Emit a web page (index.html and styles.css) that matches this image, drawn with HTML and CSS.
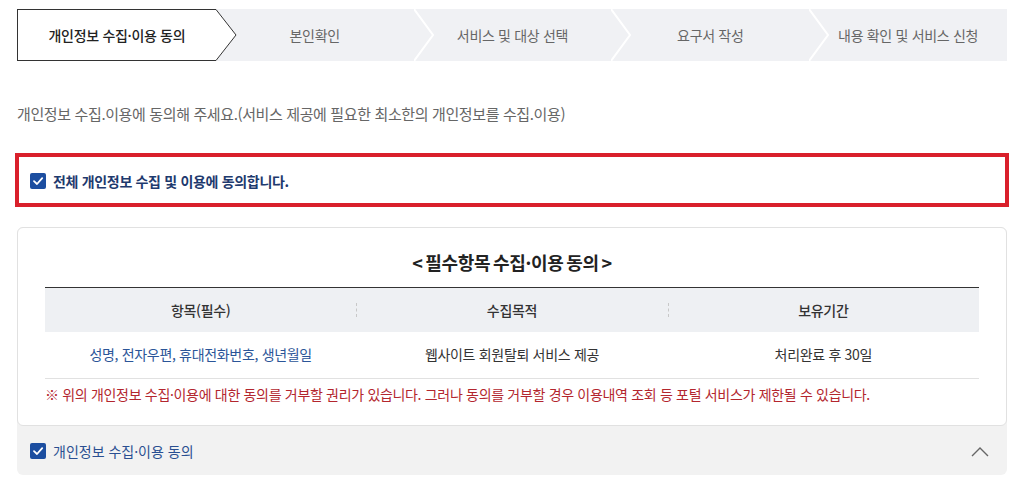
FILE: index.html
```html
<!DOCTYPE html>
<html lang="ko">
<head>
<meta charset="utf-8">
<title>개인정보 수집·이용 동의</title>
<link rel="stylesheet" href="styles.css">
</head>
<body>
<div class="page">
  <ol class="steps">
    <li class="step active">개인정보 수집·이용 동의<svg class="arrow" viewBox="0 0 21 52" width="21" height="52"><polygon points="0,0 20,26 0,52" fill="#fff"/><polyline points="0,0.5 20,26 0,51.5" fill="none" stroke="#333" stroke-width="1"/></svg></li>
    <li class="step">본인확인<svg class="arrow" viewBox="0 0 21 52" width="21" height="52"><polyline points="0,0 19,26 0,52" fill="none" stroke="#fff" stroke-width="2"/></svg></li>
    <li class="step">서비스 및 대상 선택<svg class="arrow" viewBox="0 0 21 52" width="21" height="52"><polyline points="0,0 19,26 0,52" fill="none" stroke="#fff" stroke-width="2"/></svg></li>
    <li class="step">요구서 작성<svg class="arrow" viewBox="0 0 21 52" width="21" height="52"><polyline points="0,0 19,26 0,52" fill="none" stroke="#fff" stroke-width="2"/></svg></li>
    <li class="step">내용 확인 및 서비스 신청</li>
  </ol>

  <p class="intro">개인정보 수집.이용에 동의해 주세요.(서비스 제공에 필요한 최소한의 개인정보를 수집.이용)</p>

  <label class="all-agree">
    <span class="check"><svg viewBox="0 0 16 16" width="16" height="16"><polyline points="4,8.2 7,11 12.2,5.2" fill="none" stroke="#fff" stroke-width="1.8" stroke-linecap="round" stroke-linejoin="round"/></svg></span>
    <span class="all-text">전체 개인정보 수집 및 이용에 동의합니다.</span>
  </label>

  <section class="accordion">
    <div class="panel">
      <h2 class="panel-title">&lt; 필수항목 수집·이용 동의 &gt;</h2>
      <table class="info">
        <thead>
          <tr><th>항목(필수)</th><th class="sep">수집목적</th><th class="sep">보유기간</th></tr>
        </thead>
        <tbody>
          <tr><td class="items">성명, 전자우편, 휴대전화번호, 생년월일</td><td>웹사이트 회원탈퇴 서비스 제공</td><td>처리완료 후 30일</td></tr>
        </tbody>
      </table>
      <p class="note">※ 위의 개인정보 수집·이용에 대한 동의를 거부할 권리가 있습니다. 그러나 동의를 거부할 경우 이용내역 조회 등 포털 서비스가 제한될 수 있습니다.</p>
    </div>
    <div class="acc-head">
      <label class="acc-label">
        <span class="check"><svg viewBox="0 0 16 16" width="16" height="16"><polyline points="4,8.2 7,11 12.2,5.2" fill="none" stroke="#fff" stroke-width="1.8" stroke-linecap="round" stroke-linejoin="round"/></svg></span>
        <span class="acc-text">개인정보 수집·이용 동의</span>
      </label>
      <svg class="chev" viewBox="0 0 18 11" width="18" height="11"><polyline points="1,10 9,2 17,10" fill="none" stroke="#666" stroke-width="1.4"/></svg>
    </div>
  </section>
</div>
</body>
</html>
```

FILE: styles.css
```css
* { box-sizing: border-box; }
html, body { margin: 0; padding: 0; background: #fff; }
body {
  font-family: "Noto Sans CJK KR", "Noto Sans", sans-serif;
  color: #333;
  letter-spacing: -0.02em;
}
.page { padding: 9px 17px 0; }

.steps {
  list-style: none;
  margin: 0;
  padding: 0;
  display: flex;
  height: 52px;
}
.step {
  flex: 1;
  position: relative;
  display: flex;
  align-items: center;
  justify-content: center;
  background: #f0f1f4;
  color: #666;
  font-size: 14px;
  line-height: 20px;
}
.step.active {
  background: #fff;
  color: #222;
  font-weight: 500;
  border: 1px solid #333;
  border-right: 0;
}
.arrow {
  position: absolute;
  left: 100%;
  top: 0;
  z-index: 1;
  display: block;
}
.step.active .arrow { top: -1px; }

.intro {
  margin: 43px 0 0;
  font-size: 15px;
  line-height: 20px;
  color: #666;
  letter-spacing: -0.025em;
}

.all-agree {
  display: flex;
  align-items: center;
  gap: 7px;
  margin: 29px -2px 0;
  height: 54px;
  border: 4px solid #d9202b;
  padding: 2px 0 0 11px;
}
.check {
  width: 16px;
  height: 16px;
  border-radius: 2px;
  background: #1c4ea0;
  display: inline-flex;
  flex: none;
}
.check svg { display: block; }
.all-text {
  font-size: 14px;
  line-height: 20px;
  font-weight: 700;
  color: #1e3a6e;
}

.accordion {
  margin-top: 20px;
  background: #f2f2f2;
  border-radius: 6px;
}
.panel {
  background: #fff;
  border: 1px solid #e1e1e1;
  border-radius: 6px;
  padding: 22px 27px 21px;
}
.panel-title {
  margin: 0;
  text-align: center;
  font-size: 18px;
  line-height: 24px;
  font-weight: 700;
  color: #222;
  word-spacing: -2px;
}
.info {
  margin-top: 13px;
  width: 100%;
  border-collapse: collapse;
  table-layout: fixed;
  font-size: 14px;
}
.info thead tr { border-top: 1px solid #333; }
.info th {
  position: relative;
  height: 44px;
  background: #eef0f3;
  font-weight: 500;
  color: #333;
  text-align: center;
  padding: 0;
}
.info th.sep::before {
  content: "";
  position: absolute;
  left: 0;
  top: 15px;
  height: 14px;
  border-left: 1px dashed #c8c8c8;
}
.info td {
  height: 47px;
  text-align: center;
  color: #333;
  border-bottom: 1px solid #e1e1e1;
  padding: 0 0 1px;
}
.info td.items { color: #2b5598; }
.note {
  margin: 5px 0 0;
  font-size: 14px;
  line-height: 20px;
  color: #b3262e;
}

.acc-head {
  height: 49px;
  display: flex;
  align-items: center;
  justify-content: space-between;
  padding: 1px 18px 0 13px;
}
.acc-label {
  display: flex;
  align-items: center;
  gap: 7px;
}
.acc-text {
  font-size: 14px;
  line-height: 20px;
  color: #2a4f91;
  letter-spacing: 0;
}
.chev { display: block; }
```
